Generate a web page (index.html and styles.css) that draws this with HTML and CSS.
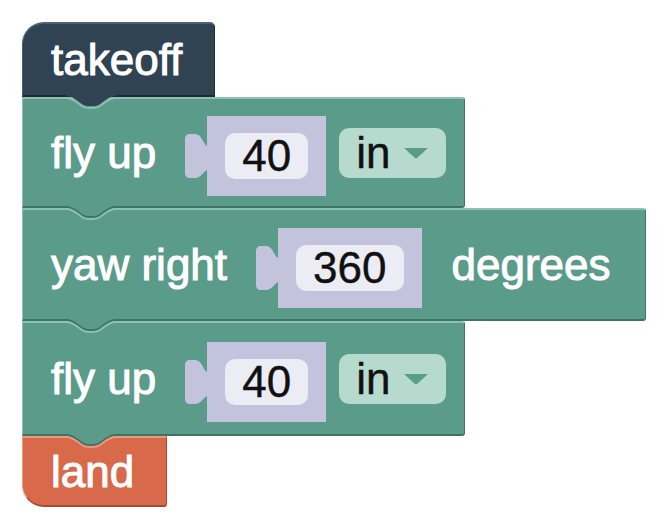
FILE: index.html
```html
<!DOCTYPE html>
<html lang="en">
<head>
    <meta charset="UTF-8">
    <title>Drone blocks</title>
    <link rel="stylesheet" href="styles.css">
</head>
<body>
    <div class="workspace">
        <div class="block hat">
            <span class="label">takeoff</span>
            <svg class="notch" width="50" height="18" viewBox="0 0 50 18">
                <path class="notch-fill" d="M0,0 H50 V1 C45,1 42,3 38,6 L34,9 C31,11 29,11 25,11 C21,11 19,11 16,9 L12,6 C8,3 5,1 0,1 Z"/>
                <path class="notch-light" d="M0,3 C5,3 8,5 12,8 L16,11 C19,13 21,13 25,13 C29,13 31,13 34,11 L38,8 C42,5 45,3 50,3"/>
            </svg>
        </div>

        <div class="block action fly">
            <span class="label">fly up</span>
            <div class="value">
                <svg class="tab" width="22" height="80" viewBox="0 0 22 80"><path d="M22,30 C18,28 17,18 10,18 L5,18 C2,18 0,20 0,23 L0,57 C0,60 2,62 5,62 L10,62 C16,62 18,56 22,54 Z"/></svg>
                <div class="socket"><span class="field">40</span></div>
            </div>
            <span class="dropdown">in<svg width="26" height="12" viewBox="0 0 26 12"><path d="M1,1 H25 L14,11 C13.4,11.6 12.6,11.6 12,11 Z"/></svg></span>
            <svg class="notch" width="50" height="18" viewBox="0 0 50 18">
                <path class="notch-fill" d="M0,0 H50 V1 C45,1 42,3 38,6 L34,9 C31,11 29,11 25,11 C21,11 19,11 16,9 L12,6 C8,3 5,1 0,1 Z"/>
                <path class="notch-dark" d="M0,1 C5,1 8,3 12,6 L16,9 C19,11 21,11 25,11 C29,11 31,11 34,9 L38,6 C42,3 45,1 50,1"/>
                <path class="notch-light" d="M0,3 C5,3 8,5 12,8 L16,11 C19,13 21,13 25,13 C29,13 31,13 34,11 L38,8 C42,5 45,3 50,3"/>
            </svg>
        </div>

        <div class="block action yaw">
            <span class="label">yaw right</span>
            <div class="value">
                <svg class="tab" width="22" height="80" viewBox="0 0 22 80"><path d="M22,30 C18,28 17,18 10,18 L5,18 C2,18 0,20 0,23 L0,57 C0,60 2,62 5,62 L10,62 C16,62 18,56 22,54 Z"/></svg>
                <div class="socket"><span class="field">360</span></div>
            </div>
            <span class="label degrees">degrees</span>
            <svg class="notch" width="50" height="18" viewBox="0 0 50 18">
                <path class="notch-fill" d="M0,0 H50 V1 C45,1 42,3 38,6 L34,9 C31,11 29,11 25,11 C21,11 19,11 16,9 L12,6 C8,3 5,1 0,1 Z"/>
                <path class="notch-dark" d="M0,1 C5,1 8,3 12,6 L16,9 C19,11 21,11 25,11 C29,11 31,11 34,9 L38,6 C42,3 45,1 50,1"/>
                <path class="notch-light" d="M0,3 C5,3 8,5 12,8 L16,11 C19,13 21,13 25,13 C29,13 31,13 34,11 L38,8 C42,5 45,3 50,3"/>
            </svg>
        </div>

        <div class="block action fly last">
            <span class="label">fly up</span>
            <div class="value">
                <svg class="tab" width="22" height="80" viewBox="0 0 22 80"><path d="M22,30 C18,28 17,18 10,18 L5,18 C2,18 0,20 0,23 L0,57 C0,60 2,62 5,62 L10,62 C16,62 18,56 22,54 Z"/></svg>
                <div class="socket"><span class="field">40</span></div>
            </div>
            <span class="dropdown">in<svg width="26" height="12" viewBox="0 0 26 12"><path d="M1,1 H25 L14,11 C13.4,11.6 12.6,11.6 12,11 Z"/></svg></span>
            <svg class="notch" width="50" height="18" viewBox="0 0 50 18">
                <path class="notch-fill" d="M0,0 H50 V1 C45,1 42,3 38,6 L34,9 C31,11 29,11 25,11 C21,11 19,11 16,9 L12,6 C8,3 5,1 0,1 Z"/>
                <path class="notch-dark" d="M0,1 C5,1 8,3 12,6 L16,9 C19,11 21,11 25,11 C29,11 31,11 34,9 L38,6 C42,3 45,1 50,1"/>
                <path class="notch-land" d="M0,3 C5,3 8,5 12,8 L16,11 C19,13 21,13 25,13 C29,13 31,13 34,11 L38,8 C42,5 45,3 50,3"/>
            </svg>
        </div>

        <div class="block land">
            <span class="label">land</span>
        </div>
    </div>
</body>
</html>
```

FILE: styles.css
```css
body {
    margin: 0;
    background-color: #fff;
    font-family: "Liberation Sans", Arial, sans-serif;
}
.workspace {
    display: flex;
    flex-direction: column;
    align-items: flex-start;
    padding: 22px 0 0 22px;
}
.block {
    position: relative;
    display: flex;
    align-items: center;
    box-sizing: border-box;
    padding: 0 32px 0 28px;
    border-style: solid;
    border-width: 2px 1px 2px 1px;
    color: #fff;
    font-size: 44px;
}
.label {
    line-height: 1;
    -webkit-text-stroke: 1px #fff;
}
.hat {
    height: 75px;
    background-color: #2f4353;
    border-color: #4b6172 #1d2b36 #1d2b36 #4b6172;
    border-radius: 22px 5px 0 0;
}
.action {
    background-color: #5b9b8a;
    border-color: #8cc1b2 #3e7366 #3e7366 #8cc1b2;
    border-radius: 0 3px 3px 0;
}
.fly {
    height: 111px;
    padding-right: 18px;
}
.fly.last {
    height: 115px;
}
.yaw {
    height: 113px;
    padding-right: 34px;
}
.land {
    height: 71px;
    background-color: #d8694b;
    border-color: #eb9a80 #a84a32 #a84a32 #eb9a80;
    border-radius: 0 0 3px 22px;
}

/* value input: puzzle tab + lavender number block */
.value {
    display: flex;
    margin: 6px 0 0 29px;
}
.tab {
    display: block;
    fill: #c3c3de;
}
.socket {
    padding: 17px 18px;
    background-color: #c3c3de;
}
.field {
    display: flex;
    align-items: center;
    height: 46px;
    padding: 0 17px;
    background-color: #ececf5;
    border-radius: 10px;
    color: #111;
    line-height: 1;
    -webkit-text-stroke: 0.4px #111;
}
.dropdown {
    display: flex;
    align-items: center;
    gap: 13px;
    height: 50px;
    margin-left: 13px;
    padding: 0 17px;
    background-color: #b6dbce;
    border-radius: 10px;
    color: #111;
    line-height: 1;
    -webkit-text-stroke: 0.4px #111;
}
.dropdown svg {
    fill: #5b9b8a;
}
.degrees {
    margin-left: 30px;
}

/* connection notch hanging into the next block */
.notch {
    position: absolute;
    left: 43px;
    top: 100%;
    z-index: 2;
}
.notch path {
    fill: none;
    stroke-width: 2;
}
.hat .notch-fill {
    fill: #2f4353;
}
.action .notch-fill {
    fill: #5b9b8a;
}
.notch-dark {
    stroke: #3e7366;
}
.notch-light {
    stroke: #8cc1b2;
}
.notch-land {
    stroke: #eb9a80;
}
```
